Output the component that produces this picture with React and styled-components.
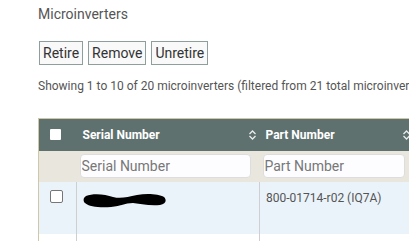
import React from "react";
import styled, { createGlobalStyle } from "styled-components";

const Global = createGlobalStyle`
  html, body { margin: 0; padding: 0; background: #fff; overflow: hidden; }
  body { font-family: Roboto, "Liberation Sans", Arial, sans-serif; }
`;

const Page = styled.div`
  padding: 4px 0 0 38px;
  width: 800px;
`;

const Title = styled.h2`
  margin: 0 0 17px;
  font-size: 14px;
  line-height: 20px;
  font-weight: 400;
  color: #555;
`;

const Toolbar = styled.div`
  display: flex;
  gap: 5px;
  padding-left: 1px;
`;

const Button = styled.button`
  font-family: inherit;
  font-size: 14px;
  height: 24px;
  padding: 0 3px;
  color: #333;
  background: #f9f9f9;
  border: 1px solid #8e9e9c;
  border-radius: 0;
`;

const Info = styled.div`
  margin-top: 13px;
  font-size: 12px;
  line-height: 16px;
  color: #555;
  white-space: nowrap;
`;

const Table = styled.table`
  margin-top: 24px;
  border-collapse: collapse;
  table-layout: fixed;
  width: 560px;
  border-top: 1px solid #cfc8a6;
  border-left: 1px solid #cfc8a6;
`;

const HeadRow = styled.tr`
  background: #5f716f;
  height: 32px;
`;

const FilterRow = styled.tr`
  background: #e9e7dd;
  height: 31px;
`;

const DataRow = styled.tr`
  background: ${(p) => (p.$odd ? "#ebf3fa" : "#fff")};
  height: ${(p) => p.$h}px;
`;

const Th = styled.th`
  padding: 0 6px;
  text-align: left;
  color: #fff;
  font-size: 12px;
  font-weight: 700;
  position: relative;
  white-space: nowrap;
`;

const CheckTh = styled.th`
  padding: 0 0 0 11px;
  text-align: left;
`;

const HeadBox = styled.span`
  display: block;
  width: 11px;
  height: 11px;
  background: #fff;
  border-radius: 1px;
`;

const SortIcon = styled.svg`
  position: absolute;
  right: 3px;
  top: 50%;
  margin-top: -5px;
`;

const FilterTd = styled.td`
  padding: 0 9px 0 3px;
`;

const FilterInput = styled.input`
  box-sizing: border-box;
  width: 100%;
  height: 24px;
  border: 1px solid #ddd;
  border-radius: 4px;
  background: #fdfdff;
  font-family: inherit;
  font-size: 14px;
  padding: 0 1px;
  color: #333;
  &::placeholder { color: #777; }
`;

const Td = styled.td`
  vertical-align: top;
  padding: 8px 6px 0;
  font-size: 12px;
  line-height: 16px;
  color: #555;
  border-right: 1px solid #cfcfcf;
  white-space: nowrap;
`;

const CheckTd = styled(Td)`
  padding: 8px 0 0 11px;
`;

const RowBox = styled.span`
  display: block;
  box-sizing: border-box;
  width: 13px;
  height: 13px;
  border: 1px solid #767676;
  border-radius: 2px;
  background: #fff;
`;

const RedactSvg = styled.svg`
  display: block;
  margin: 3px 0 0 0;
`;

const Sort = () => (
  <SortIcon width="9" height="10" viewBox="0 0 9 10">
    <path d="M1.5 4 L4.5 1 L7.5 4 M1.5 6 L4.5 9 L7.5 6" fill="none" stroke="#e8ecec" strokeWidth="1.3" />
  </SortIcon>
);

const Redacted = () => (
  <RedactSvg width="84" height="15" viewBox="0 0 84 15">
    <path d="M3 3 C10 0 22 1 30 4 C38 6 44 4 54 2 C64 0 76 1 81 4 C84 7 83 11 77 12 C67 13 58 11 50 10 C43 10 38 13 28 14 C18 15 6 14 2 10 C0 8 0 5 3 3 Z" fill="#000" />
  </RedactSvg>
);

export default function App() {
  return (
    <>
      <Global />
      <Page>
        <Title>Microinverters</Title>
        <Toolbar>
          <Button>Retire</Button>
          <Button>Remove</Button>
          <Button>Unretire</Button>
        </Toolbar>
        <Info>Showing 1 to 10 of 20 microinverters (filtered from 21 total microinverters)</Info>
        <Table>
          <colgroup>
            <col style={{ width: 38 }} />
            <col style={{ width: 183 }} />
            <col style={{ width: 154 }} />
            <col style={{ width: 185 }} />
          </colgroup>
          <thead>
            <HeadRow>
              <CheckTh><HeadBox /></CheckTh>
              <Th>Serial Number<Sort /></Th>
              <Th>Part Number<Sort /></Th>
              <Th>Status<Sort /></Th>
            </HeadRow>
            <FilterRow>
              <td />
              <FilterTd><FilterInput placeholder="Serial Number" /></FilterTd>
              <FilterTd><FilterInput placeholder="Part Number" /></FilterTd>
              <FilterTd><FilterInput placeholder="Status" /></FilterTd>
            </FilterRow>
          </thead>
          <tbody>
            <DataRow $odd $h={52}>
              <CheckTd><RowBox /></CheckTd>
              <Td><Redacted /></Td>
              <Td>800-01714-r02 (IQ7A)</Td>
              <Td>Active</Td>
            </DataRow>
            <DataRow $h={52}>
              <CheckTd><RowBox /></CheckTd>
              <Td></Td>
              <Td>800-01714-r02 (IQ7A)</Td>
              <Td>Active</Td>
            </DataRow>
          </tbody>
        </Table>
      </Page>
    </>
  );
}
